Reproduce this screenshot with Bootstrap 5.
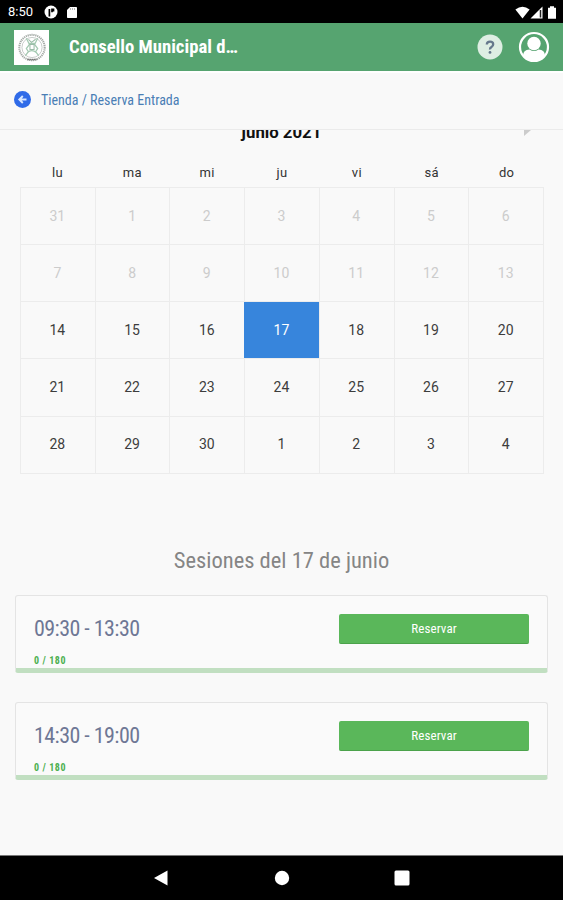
<!DOCTYPE html>
<html lang="es">
<head>
<meta charset="utf-8">
<meta name="viewport" content="width=device-width, initial-scale=1">
<title>Reserva Entrada</title>
<link href="https://cdn.jsdelivr.net/npm/bootstrap@5.3.0/dist/css/bootstrap.min.css" rel="stylesheet">
<style>
body{font-family:Roboto,"Liberation Sans",sans-serif;background:#f9f9f9;height:900px;font-size:13px;color:#333}
.narrow,.narrow .btn{font-stretch:75%}
.status-strip{height:23px;font-size:13px;padding:1px 6px 0 8px}
.status-icons{gap:8px;margin-left:11px}
.app-header{height:48px;background:#56a470;padding:0 13px 0 14px}
.brand-title{font-size:18.7px;margin-left:20px;padding-top:1px}
.crest{width:35px;height:35px}
.avatar{margin-left:15px}
.crumbs{height:59px;border-top:2px solid #fff;border-bottom:1px solid #ebebeb;padding:0 14px 3px;font-size:14px;color:#4a7eb5}
.crumb-text{margin-left:10px;padding-top:1px}
.viewport-area{padding:0 15px}
.cal-head{height:32px}
.cal-title{font-size:16.8px;line-height:20px;margin-top:-8px;color:#111}
.cal-grid{display:grid;grid-template-columns:repeat(7,minmax(0,1fr));margin:0 4px 0 5px}
.week-day{height:25px;line-height:21px;text-align:center;font-size:13px;letter-spacing:.3px}
.days{border-top:1px solid #ececec;border-left:1px solid #ececec;grid-auto-rows:57.15px}
.day{border-right:1px solid #ececec;border-bottom:1px solid #ececec;display:flex;align-items:center;justify-content:center;font-size:14px;padding-right:1px;color:#3d3d3d}
.day.off{color:#ccc}
.day.chosen{background:#3785dc;color:#fff;margin-left:-1px;padding-right:0}
.sessions-title{font-size:22.5px;line-height:28px;margin-top:72px;margin-bottom:21px;color:#858585}
.session{height:78px;background:#fafafa;border:1px solid #e4e4e4;border-bottom:5px solid #c1dfc1;border-radius:3px;margin-bottom:29px;padding:18px 18px 0}
.hours{font-size:22px;line-height:30px;color:#6e7795;letter-spacing:-.55px}
.seats{font-size:10px;line-height:12px;color:#4cb050;margin-top:11px;letter-spacing:.55px}
.btn-book{width:190px;height:30px;background:#5ab75a;color:#fff;border:0;border-bottom:1px solid #4ba24b;border-radius:2px;font-size:13px;line-height:30px;padding:0;letter-spacing:.1px}
.nav-strip{height:45px;border-top:1px solid #777;gap:104px}
.nav-strip svg{width:16px;height:16px}
</style>
<script src="https://cdn.jsdelivr.net/npm/bootstrap@5.3.0/dist/js/bootstrap.bundle.min.js"></script>
</head>
<body class="d-flex flex-column overflow-hidden">
<div class="status-strip bg-black text-white d-flex align-items-center flex-shrink-0">
<span>8:50</span>
<div class="status-icons d-flex align-items-center">
<svg width="14" height="14" viewBox="0 0 14 14"><circle cx="7" cy="7" r="6.5" fill="#fff"/><path d="M5.400 11.500V4M8 3.500v3.800M9.500 3.500v3" fill="none" stroke="#000" stroke-width="1.700"/></svg>
<svg width="12" height="13" viewBox="0 0 12 13"><path d="M4 1h6.2q.8 0 .8.8v9.4q0 .8-.8.8H1.8q-.8 0-.8-.8V4z" fill="#fff"/><path d="M4.5 2v2M6.5 2v2M8.500 2v2" stroke="#999" stroke-width=".7"/></svg>
</div>
<svg class="ms-auto" width="15" height="13" viewBox="0 0 15 13"><path d="M.4 3.500Q7.500-2 14.600 3.500L7.500 12.500z" fill="#fff"/></svg>
<svg class="me-1" width="13" height="13" viewBox="0 0 13 13"><path d="M12.500.5V12.500H.5z" fill="#fff"/><path d="M10.500 4v7.500" stroke="#222" stroke-width="1.500"/></svg>
<svg width="10" height="13" viewBox="0 0 10 13"><path d="M3 .3h4v1.500h2v11H1v-11h2z" fill="#fff"/></svg>
</div>
<header class="app-header d-flex align-items-center text-white flex-shrink-0">
<svg class="crest" viewBox="0 0 34 34"><path d="M0 0h34v34H0z" fill="#fff"/><circle cx="17.500" cy="17" r="12.300" fill="none" stroke="#a4aaa6" stroke-width="2" stroke-dasharray="1.200 .7"/><circle cx="17.500" cy="17" r="9.800" fill="none" stroke="#b4bab6" stroke-width=".7"/><path d="M12 8l3 6-3 4 2 3-3 4M23 8l-3 6 3 4-2 3 3 4M13 22q4-4 9 0M14 13h7" fill="none" stroke="#a3c9b1" stroke-width="1.200"/><path d="M15.500 14h4v5h-4zM14 9l3 3 4-3" fill="none" stroke="#9abba7" stroke-width="1"/><path d="M13 28.600h9" stroke="#777" stroke-width="1.500" stroke-dasharray="1.500 .5"/></svg>
<h1 class="brand-title narrow fw-bold mb-0">Consello Municipal d…</h1>
<svg class="ms-auto" width="26" height="26" viewBox="0 0 26 26"><circle cx="13" cy="13" r="12.500" fill="#deeee3"/><path d="M9.800 10.500Q9.900 7.700 13 7.700t3.200 2.600Q16.200 12 14.500 13T13 15.500" fill="none" stroke="#66788c" stroke-width="2.300"/><circle cx="13" cy="18.400" r="1.400" fill="#66788c"/></svg>
<svg class="avatar" width="32" height="32" viewBox="0 0 32 32"><circle cx="16" cy="16" r="14" fill="none" stroke="#fff" stroke-width="2.200"/><circle cx="16" cy="12.500" r="6.700" fill="#fff"/><path d="M5 25q0-6.500 6.500-6.500Q16 21.500 20.500 18.500 27 18.500 27 25 22 30 16 30T5 25z" fill="#fff"/></svg>
</header>
<nav class="crumbs narrow d-flex align-items-center flex-shrink-0">
<svg width="17" height="17" viewBox="0 0 17 17"><circle cx="8.500" cy="8.500" r="8.500" fill="#306be8"/><path d="M8.800 5L5.300 8.500 8.800 12M5.500 8.500h7" fill="none" stroke="#d8e7ff" stroke-width="1.900"/></svg>
<span class="crumb-text">Tienda / Reserva Entrada</span>
</nav>
<main class="viewport-area flex-grow-1 overflow-hidden">
<div class="cal-head d-flex justify-content-center overflow-hidden position-relative"><div class="cal-title fw-bold">junio 2021</div>
<svg class="position-absolute top-0 end-0 me-3" width="9" height="8" viewBox="0 0 9 8"><path d="M1 0h7L1 6z" fill="#ccc"/></svg></div>
<div class="cal-grid"><div class="week-day">lu</div><div class="week-day">ma</div><div class="week-day">mi</div><div class="week-day">ju</div><div class="week-day">vi</div><div class="week-day">sá</div><div class="week-day">do</div></div>
<div class="cal-grid days">
<div class="day off">31</div><div class="day off">1</div><div class="day off">2</div><div class="day off">3</div><div class="day off">4</div><div class="day off">5</div><div class="day off">6</div>
<div class="day off">7</div><div class="day off">8</div><div class="day off">9</div><div class="day off">10</div><div class="day off">11</div><div class="day off">12</div><div class="day off">13</div>
<div class="day">14</div><div class="day">15</div><div class="day">16</div><div class="day chosen">17</div><div class="day">18</div><div class="day">19</div><div class="day">20</div>
<div class="day">21</div><div class="day">22</div><div class="day">23</div><div class="day">24</div><div class="day">25</div><div class="day">26</div><div class="day">27</div>
<div class="day">28</div><div class="day">29</div><div class="day">30</div><div class="day">1</div><div class="day">2</div><div class="day">3</div><div class="day">4</div>
</div>
<h2 class="sessions-title narrow fw-normal text-center">Sesiones del 17 de junio</h2>
<section class="session narrow d-flex justify-content-between align-items-start">
<div><div class="hours">09:30 - 13:30</div><div class="seats fw-bold">0 / 180</div></div>
<button class="btn btn-book">Reservar</button>
</section>
<section class="session narrow d-flex justify-content-between align-items-start">
<div><div class="hours">14:30 - 19:00</div><div class="seats fw-bold">0 / 180</div></div>
<button class="btn btn-book">Reservar</button>
</section>
</main>
<footer class="nav-strip bg-black d-flex align-items-center justify-content-center flex-shrink-0">
<svg viewBox="0 0 16 16"><path d="M0 8L13.500.5v15z" fill="#fff"/></svg>
<svg viewBox="0 0 16 16"><circle cx="8" cy="8" r="7.200" fill="#fff"/></svg>
<svg viewBox="0 0 16 16"><rect x=".5" y=".5" width="15" height="15" rx="1.500" fill="#fff"/></svg>
</footer>
</body>
</html>
